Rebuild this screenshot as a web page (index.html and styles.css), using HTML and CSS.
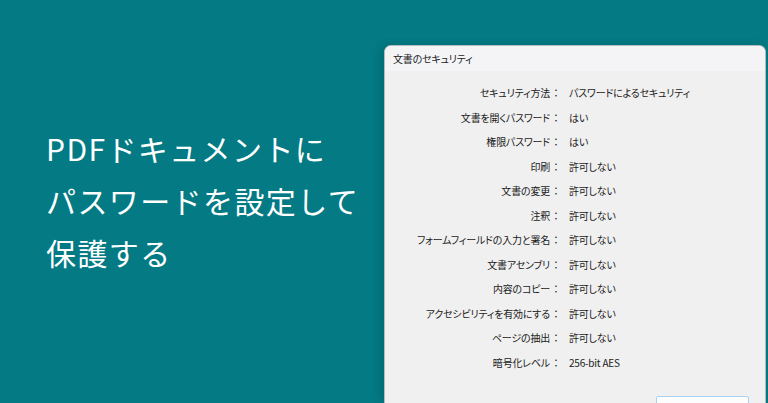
FILE: index.html
```html
<!DOCTYPE html>
<html lang="ja">
<head>
    <meta charset="UTF-8">
    <meta name="viewport" content="width=device-width, initial-scale=1.0">
    <title>PDFドキュメントにパスワードを設定して保護する</title>
    <link rel="stylesheet" href="styles.css">
</head>
<body>
    <div class="page">
        <section class="hero">
            <h1>PDFドキュメントに<br>パスワードを設定して<br>保護する</h1>
        </section>

        <div class="dialog">
            <div class="dialog-title">文書のセキュリティ</div>
            <div class="dialog-body">
                <dl class="props">
                    <dt>セキュリティ方法</dt><dd>パスワードによるセキュリティ</dd>
                    <dt>文書を開くパスワード</dt><dd>はい</dd>
                    <dt>権限パスワード</dt><dd>はい</dd>
                    <dt>印刷</dt><dd>許可しない</dd>
                    <dt>文書の変更</dt><dd>許可しない</dd>
                    <dt>注釈</dt><dd>許可しない</dd>
                    <dt>フォームフィールドの入力と署名</dt><dd>許可しない</dd>
                    <dt>文書アセンブリ</dt><dd>許可しない</dd>
                    <dt>内容のコピー</dt><dd>許可しない</dd>
                    <dt>アクセシビリティを有効にする</dt><dd>許可しない</dd>
                    <dt>ページの抽出</dt><dd>許可しない</dd>
                    <dt>暗号化レベル</dt><dd>256-bit AES</dd>
                </dl>
                <div class="actions">
                    <button class="button" aria-label="OK"></button>
                </div>
            </div>
        </div>
    </div>
</body>
</html>
```

FILE: styles.css
```css
html, body {
    margin: 0;
    padding: 0;
    height: 100%;
    overflow: hidden;
}
body {
    background-color: #037a84;
    font-family: "Noto Sans CJK JP", "Noto Sans", sans-serif;
}
.page {
    display: flex;
    height: 100%;
}
.hero {
    width: 384px;
    flex-shrink: 0;
    padding: 122px 0 0 46px;
    box-sizing: border-box;
}
.hero h1 {
    margin: 0;
    color: #fff;
    font-size: 30px;
    font-weight: 400;
    line-height: 52px;
    letter-spacing: 1.4px;
    white-space: nowrap;
}
.dialog {
    flex: 1;
    margin: 45px 2px 0 0;
    background-color: #f0f0f0;
    border: 1px solid #b5bcbd;
    border-bottom: none;
    border-radius: 7px 7px 0 0;
    box-shadow: -4px 0 10px rgba(0, 0, 0, 0.12);
    overflow: hidden;
    color: #1b1b1b;
    font-size: 10px;
    letter-spacing: -0.2px;
    /* proportional kana, closer to the system UI font */
    font-feature-settings: "palt";
}
.dialog-title {
    height: 25px;
    line-height: 25px;
    padding-left: 8px;
    background-color: #f4f4f7;
}
.dialog-body {
    padding-top: 10px;
}
.props {
    display: grid;
    grid-template-columns: 176px 1fr;
    grid-auto-rows: 24.5px;
    column-gap: 8px;
    margin: 0;
}
.props dt {
    text-align: right;
    line-height: 24.5px;
    white-space: nowrap;
}
/* full-width colon keeps its own spacing */
.props dt::after {
    content: "：";
    font-feature-settings: normal;
    letter-spacing: 0;
    margin-left: 1px;
}
.props dd {
    margin: 0;
    line-height: 24.5px;
    white-space: nowrap;
}
.actions {
    display: flex;
    justify-content: flex-end;
    padding: 21px 16px 0 0;
}
.button {
    width: 93px;
    height: 24px;
    background-color: #fdfdfd;
    border: 1px solid #a9d2f2;
    border-radius: 2px;
}
```
